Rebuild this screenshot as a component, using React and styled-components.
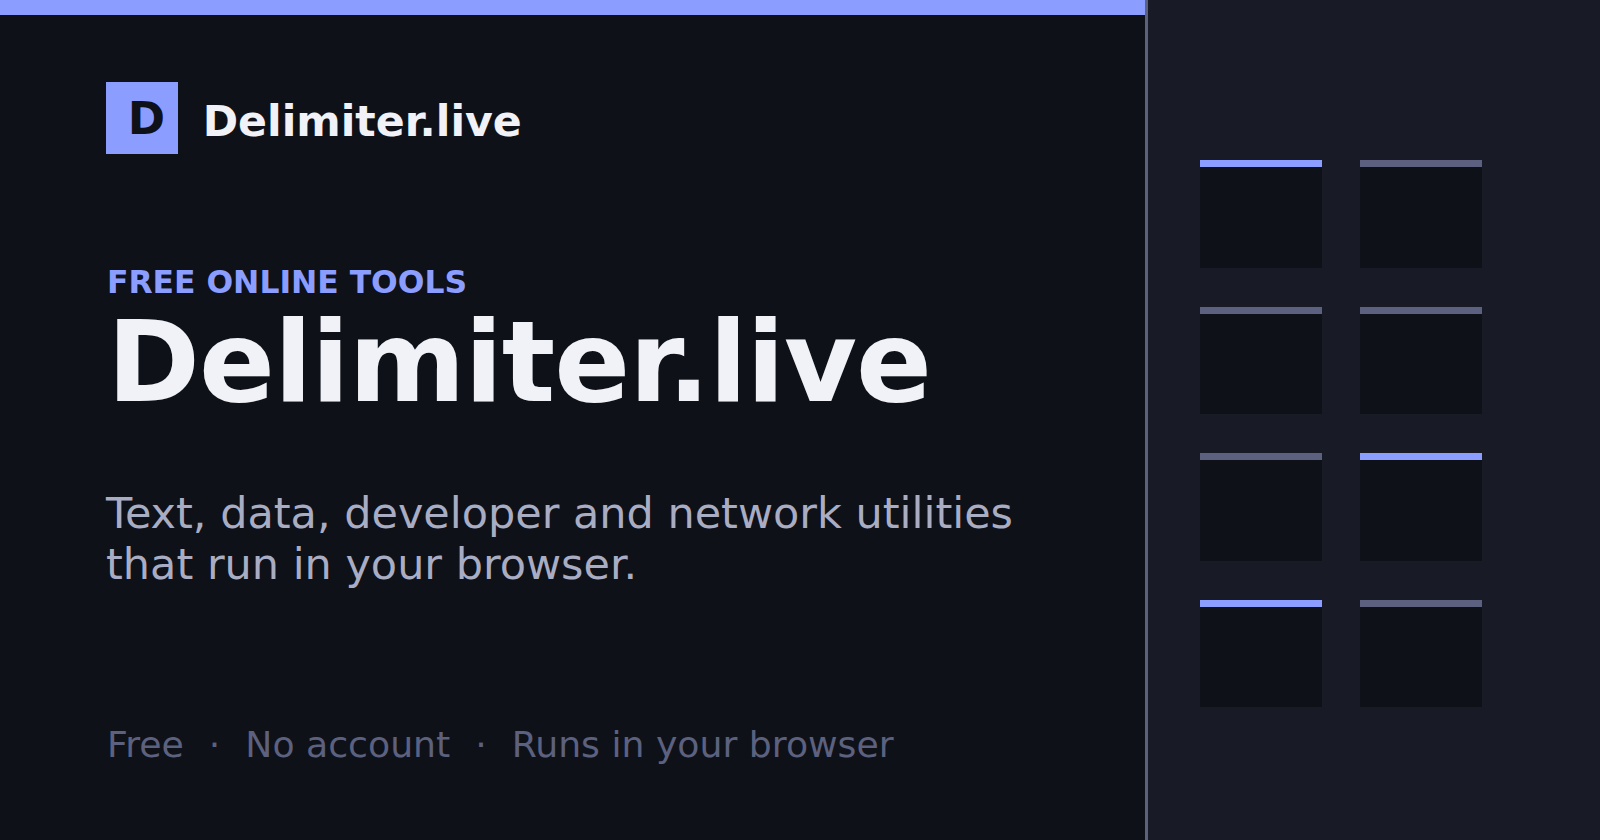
import React from 'react'
import styled, { createGlobalStyle } from 'styled-components'

const Global = createGlobalStyle`
  html, body { margin: 0; padding: 0; background: #0f1118; }
  body { font-family: "DejaVu Sans", sans-serif; }
`

const Page = styled.div`
  width: 1600px;
  height: 840px;
  display: flex;
  overflow: hidden;
`

const Main = styled.div`
  width: 1145px;
  display: flex;
  flex-direction: column;
  background: #0f1118;
`

const TopBar = styled.div`
  height: 15px;
  background: #8b9eff;
  flex: none;
`

const Content = styled.div`
  flex: 1;
  padding: 67px 0 0 106px;
  display: flex;
  flex-direction: column;
`

const Brand = styled.div`
  display: flex;
  align-items: center;
  gap: 25px;
  height: 72px;
`

const LogoBox = styled.div`
  width: 71.7px;
  height: 71.7px;
  box-sizing: border-box;
  padding-left: 9px;
  background: #8b9eff;
  color: #0f1118;
  font-size: 45px;
  font-weight: 700;
  display: flex;
  align-items: center;
  justify-content: center;
`

const BrandName = styled.div`
  font-size: 42.67px;
  font-weight: 700;
  color: #f0f2f8;
  line-height: 72px;
  position: relative;
  top: 3px;
`

const Eyebrow = styled.div`
  margin: 109px 0 0 1px;
  font-size: 31.4px;
  line-height: 38px;
  font-weight: 700;
  color: #8b9eff;
`

const Title = styled.h1`
  margin: 5px 0 0 1px;
  font-size: 112px;
  line-height: 112px;
  font-weight: 700;
  letter-spacing: -1px;
  color: #f0f2f8;
`

const Sub = styled.p`
  margin: 70px 0 0;
  font-size: 42.96px;
  line-height: 51px;
  color: #a9adc3;
`

const Meta = styled.div`
  margin: 133px 0 0 1px;
  display: flex;
  gap: 25px;
  font-size: 36.2px;
  line-height: 44px;
  color: #5c617f;
`

const Side = styled.div`
  flex: 1;
  background: #181b26;
  border-left: 3px solid #5c617f;
  padding: 160px 0 0 52px;
`

const CardGrid = styled.div`
  display: grid;
  grid-template-columns: 121.6px 121.6px;
  grid-auto-rows: 107.6px;
  column-gap: 38.4px;
  row-gap: 39px;
`

const Card = styled.div`
  background: #0f1118;
  border-top: 7px solid ${p => (p.$on ? '#8b9eff' : '#5c617f')};
`

const cards = [true, false, false, false, false, true, true, false]

export default function App() {
  return (
    <Page>
      <Global />
      <Main>
        <TopBar />
        <Content>
          <Brand>
            <LogoBox>D</LogoBox>
            <BrandName>Delimiter.live</BrandName>
          </Brand>
          <Eyebrow>FREE ONLINE TOOLS</Eyebrow>
          <Title>Delimiter.live</Title>
          <Sub>
            Text, data, developer and network utilities
            <br />
            that run in your browser.
          </Sub>
          <Meta>
            <span>Free</span>
            <span>·</span>
            <span>No account</span>
            <span>·</span>
            <span>Runs in your browser</span>
          </Meta>
        </Content>
      </Main>
      <Side>
        <CardGrid>
          {cards.map((on, i) => (
            <Card key={i} $on={on} />
          ))}
        </CardGrid>
      </Side>
    </Page>
  )
}
